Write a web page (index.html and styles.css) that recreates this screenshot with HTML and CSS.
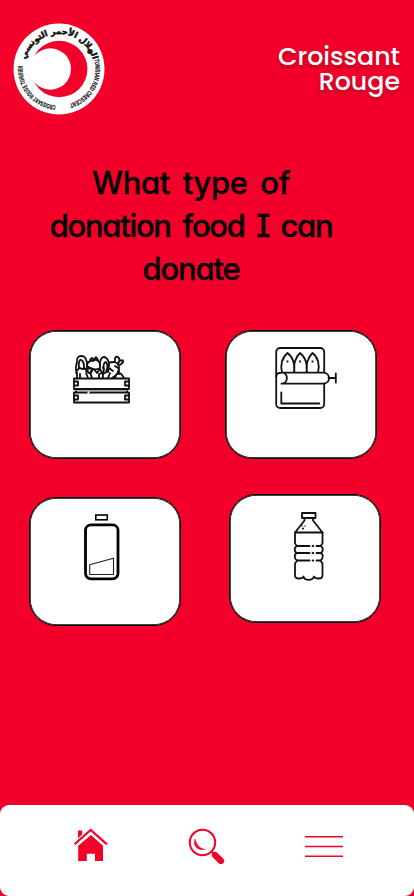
FILE: index.html
```html
<!DOCTYPE html>
<html lang="en">
<head>
<meta charset="utf-8">
<meta name="viewport" content="width=device-width, initial-scale=1">
<title>Croissant Rouge</title>
<link rel="stylesheet" href="styles.css">
</head>
<body>
<div class="screen">
  <header class="header">
    <svg class="logo" viewBox="0 0 92 92" role="img" aria-label="Croissant Rouge Tunisien">
      <defs>
        <path id="ringTop" d="M12.900 57.300A35 35 0 1 1 79.100 57.300"/>
        <path id="ringRight" d="M81.200 36.600A36.400 36.400 0 0 1 49.200 82.300"/>
        <path id="ringLeft" d="M42.800 82.300A36.400 36.400 0 0 1 10.800 36.600"/>
      </defs>
      <circle cx="46" cy="46" r="45.500" fill="#fff"/>
      <circle cx="46.200" cy="46" r="28.200" fill="#f3002a"/>
      <circle cx="37.300" cy="46" r="20.700" fill="#fff"/>
      <text class="ring-arabic" direction="rtl" text-anchor="middle"><textPath href="#ringTop" startOffset="50%">الهلال الأحمر التونسي</textPath></text>
      <text class="ring-latin" textLength="56" lengthAdjust="spacingAndGlyphs"><textPath href="#ringRight" textLength="56" lengthAdjust="spacingAndGlyphs">TUNISIAN RED CRESCENT</textPath></text>
      <text class="ring-latin" textLength="57" lengthAdjust="spacingAndGlyphs"><textPath href="#ringLeft" textLength="57" lengthAdjust="spacingAndGlyphs">CROISSANT ROUGE TUNISIEN</textPath></text>
    </svg>
    <div class="brand"><span>Croissant</span><br><span>Rouge</span></div>
  </header>

  <h1 class="question"><span class="line-one">What type of</span><br><span class="line-two">donation food I can</span><br><span class="line-three">donate</span></h1>

  <main class="choices">
    <button class="card" aria-label="Vegetables">
      <svg class="icon icon-crate" viewBox="0 0 60 52">
        <g class="stroke">
          <path d="M2 25.500h55v10.500H2zM2 39.500h55v10H2zM4 36v3.500M55 36v3.500"/>
          <path d="M2 28.500h4v4H2M57 28.500h-4v4h4M2 42.500h4v4H2M57 42.500h-4v4h4"/>
          <path class="thin" d="M4 37.500h51"/>
          <path d="M5 25v-5c-2-4-1-8 0-11-1-4 2-6 4-6 3 0 5 2 5 4 2 2 1 4 1 7M7 15c-1-6 1-9 2-8 3 1 3 4 3 8M4 20c1-4 4-6 6-4 3-1 5 0 6 2M8 21v4M14 20l2 5"/>
          <path d="M15 11c2-4 5-3 6-3 2-2 6-1 7 3v4c-3 2-9 2-13-2M18 7l2-2 2 2 2-3 2 3M12 16c3-2 5 1 7-1 3 2 0 5-2 5l-3-2M19 18c-1 3 0 5 1 7M22 16l3 4 3-4 2 4-3 1v4M31 14c2 4-1 7 0 11"/>
          <path d="M28 12V9c1-5 4-6 6-4 3 2 3 4 3 7l-1 7M32 17c-1-5 0-8 2-8 2 3 2 6 0 10M37 10c4-2 9-1 10 3 1 5-3 10-7 12M37 15l4 3M43 13l3 2M38 20l-2 5M43 9c-1-4 1-6 3-5 2 2 2 4 0 6 3-4 6-3 5-1s-3 3-5 3M43 25c1-5 5-6 7-3l2 3M47 17v4M31 21l5-3"/>
        </g>
        <path d="M15.500 39.500h2" stroke="#fff" stroke-width="2.200"/>
      </svg>
    </button>
    <button class="card" aria-label="Canned food">
      <svg class="icon icon-can" viewBox="0 0 64 64">
        <g class="stroke">
          <rect x="2.200" y="2" width="48" height="60" rx="4"/>
          <path d="M8 26.500c-2-7 0-15 5.500-19.500 5.500 4 8 12 6.500 19.500M20.500 26.500c-1.500-7 .5-15 5.500-19.500 5.500 4 8 12 6.500 19.500M33 26.500c-1.500-7 .5-15 5.500-19.500 5.500 4 7.500 12 5.500 19.500"/>
          <path d="M8 26.700h41c8 0 8 11 0 11H7.500c7 0 7-11 1-11-3 0-6 0-6.300 4" fill="#fff"/>
          <path d="M54.500 32h7M61.800 27.500v9M7.300 46.500v11h38"/>
        </g>
        <path d="M13.500 14.500v2M26 14.500v2M38.500 14.500v2" stroke="#111" stroke-width="1.800"/>
      </svg>
    </button>
    <button class="card" aria-label="Battery">
      <svg class="icon icon-battery" viewBox="0 0 38 68">
        <rect x="12.800" y="2" width="11.500" height="4.800" fill="none" stroke="#000" stroke-width="1.600"/>
        <rect x="2.500" y="11.800" width="32.500" height="54" rx="5.500" fill="none" stroke="#000" stroke-width="2.800"/>
        <path d="M6.700 51.800 30.500 45.200V61.500H6.700z" fill="none" stroke="#222" stroke-width="1.100"/>
      </svg>
    </button>
    <button class="card card-water" aria-label="Water">
      <svg class="icon icon-bottle" viewBox="0 0 32 68">
        <g class="stroke">
          <path d="M9 1h13.500v5H9zM11.500 6.500v2L2 20.500h27.500L20 8.500v-2"/>
          <path d="M2 20.500v11l2 2.500c-3 1-3 6 0 7-3 1-3 6 0 7.500l-2 3v12c0 2.200 1.800 3 4 3s4-.5 4.500-2c1 4.500 9 4.500 10.500 0 .5 1.500 2.500 2 4.500 2s4-.8 4-3v-12l-2-3c3-1.500 3-6.500 0-7.500 3-1 3-6 0-7l2-2.500v-11"/>
          <path d="M4 34h12.500M23.500 34h4M4 41h12.500M23.500 41h4M4 48.500h12.500M23.500 48.500h4"/>
          <path d="M19.500 34h.8M19.500 41h.8M19.500 48.500h.8"/>
        </g>
        <path d="M9 16.500h2M11.500 14h1M8.500 14h1" stroke="#111" stroke-width="1.500"/>
      </svg>
    </button>
  </main>

  <nav class="tabs">
    <a class="tab" aria-label="Home">
      <svg class="tab-home" viewBox="0 0 36 34">
        <path d="M5 2.500h4.200v4L5 10.300zM18 7 30 17.800V33h-8v-7.200h-8.200V33H5.200V17.800z" fill="#f3002a"/>
        <path d="M1.500 16.300 17.700 2 34 16.300" fill="none" stroke="#f3002a" stroke-width="2.200"/>
      </svg>
    </a>
    <a class="tab" aria-label="Search">
      <svg class="tab-search" viewBox="0 0 38 38">
        <circle cx="14.500" cy="14.500" r="12.700" fill="none" stroke="#f3002a" stroke-width="2"/>
        <path d="M7 11C4.500 17 9.500 23.500 17 21.300 11.800 20.800 8.500 17 7 11z" fill="#f3002a" stroke="#f3002a" stroke-width=".5"/>
        <path d="m23 23 3 3" stroke="#f3002a" stroke-width="2"/>
        <path d="m27 27 6 6" stroke="#f3002a" stroke-width="6.300" stroke-linecap="round"/>
      </svg>
    </a>
    <a class="tab" aria-label="Menu">
      <svg class="tab-menu" viewBox="0 0 38 24">
        <path d="M0 1.700h38M0 11.500h38M0 21.300h38" stroke="#f3002a" stroke-width="1.500"/>
      </svg>
    </a>
  </nav>
</div>
</body>
</html>
```
FILE: styles.css
```css
* { box-sizing: border-box; }

body {
  margin: 0;
  background: #f3002a;
}

.screen {
  width: 414px;
  height: 896px;
  display: flex;
  flex-direction: column;
  background: #f3002a;
  overflow: hidden;
}

.header {
  display: flex;
  justify-content: space-between;
  height: 161px;
  padding: 23px 14px 0 13px;
}

.logo { width: 92px; height: 92px; }

.ring-latin {
  font: bold 6.6px "Liberation Sans", sans-serif;
  fill: #111;
  stroke: #111;
  stroke-width: .2;
}

.ring-arabic {
  font: bold 8.3px "DejaVu Sans", sans-serif;
  fill: #111;
  stroke: #111;
  stroke-width: .5;
}

.brand {
  padding-top: 21px;
  color: #fff;
  font: 500 25.3px/25px Poppins, Inter, sans-serif;
  font-feature-settings: "cv11";
  text-align: right;
  white-space: nowrap;
  text-shadow: 0 3px 4px rgba(0, 0, 0, .25);
}

.question {
  width: 300px;
  margin: 0 0 0 41px;
  height: 169px;
  color: #000;
  font: 500 31px/43px Inter, sans-serif;
  font-feature-settings: "cv11", "cv08";
  text-align: center;
  white-space: nowrap;
  -webkit-text-stroke: .3px #000;
}

.line-one { letter-spacing: -.4px; word-spacing: 5px; }
.line-two { letter-spacing: -1.3px; word-spacing: 4.6px; }
.line-three { letter-spacing: -1.2px; }

.choices {
  display: grid;
  grid-template-columns: 152px 152px;
  grid-template-rows: 129px 129px;
  column-gap: 44px;
  row-gap: 38px;
  padding-left: 29px;
  flex: 1;
}

.card {
  width: 152px;
  height: 129px;
  padding: 0;
  display: flex;
  align-items: flex-start;
  background: #fff;
  border: 1px solid #000;
  border-radius: 27px;
  box-shadow: inset 0 0 0 .7px #000;
}

.card-water { margin: -3px 0 0 4px; }

.icon { display: block; overflow: visible; }
.stroke { fill: none; stroke: #111; stroke-width: 1.8; stroke-linecap: round; stroke-linejoin: round; }
.thin { stroke: #aaa; stroke-width: 1; }

.icon-crate { width: 60px; height: 52px; margin: 22px 0 0 42px; }
.icon-can { width: 64px; height: 64px; margin: 15px 0 0 47.5px; }
.icon-battery { width: 38px; height: 68px; margin: 15px 0 0 53px; }
.icon-bottle { width: 32px; height: 68px; margin: 17px 0 0 63px; }

.tabs {
  display: flex;
  height: 91px;
  padding: 23px 71px 0 73px;
  justify-content: space-between;
  background: #fff;
  border-radius: 9px;
}

.tab { display: block; }
.tab svg { display: block; }
.tab-home { width: 36px; height: 34px; }
.tab-search { width: 38px; height: 38px; margin-left: -1px; }
.tab-menu { width: 38px; height: 24px; margin-top: 7px; }
```
